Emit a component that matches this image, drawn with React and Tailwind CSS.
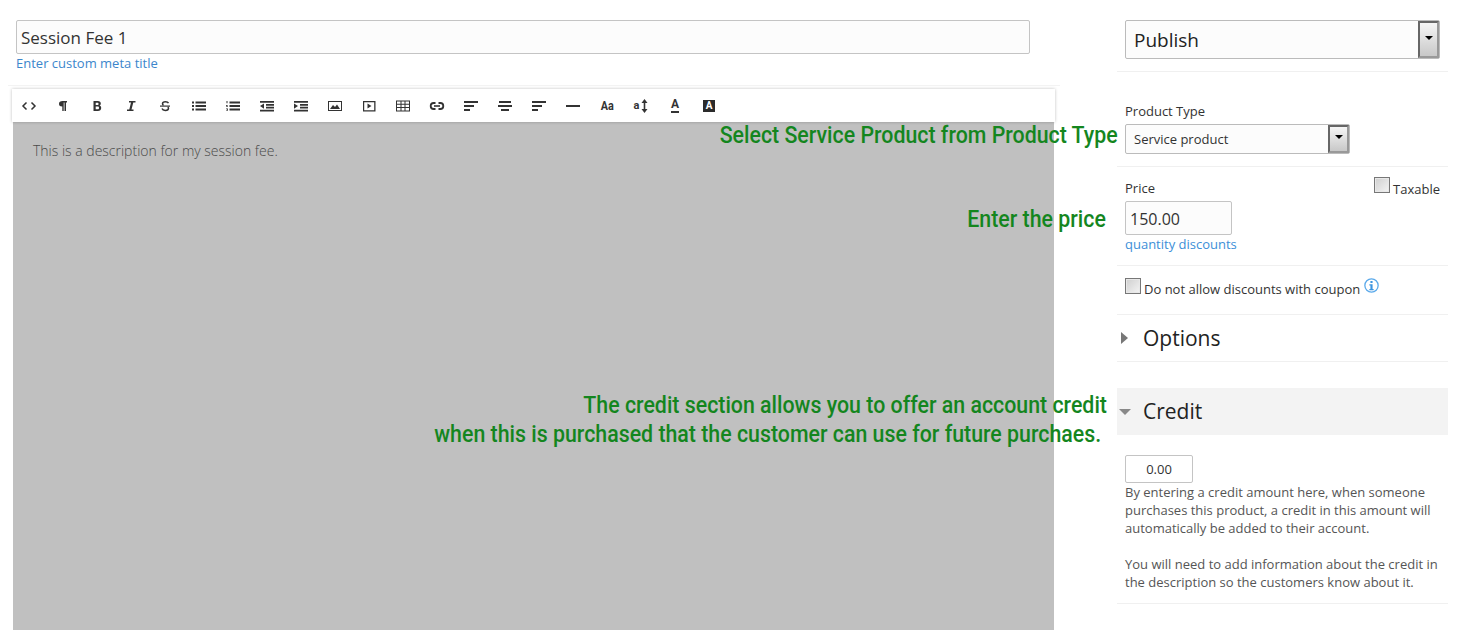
import React from "react";

const I = ({ children, w = 16, h = 16 }) => (
  <svg width={w} height={h} viewBox="0 0 16 16" fill="#333" className="block">{children}</svg>
);
const R = (x, y, w, h, k) => <rect key={k} x={x} y={y} width={w} height={h} />;

const icons = [
  <I><path d="M5.500 4.500 2 8l3.500 3.500M10.500 4.500 14 8l-3.500 3.500" fill="none" stroke="#333" strokeWidth="1.500" /></I>,
  <I><path d="M7.500 3H12v1.500h-1V13H9.500V4.500H8.700V13H7.300V8.500C4.500 8.500 4 7 4 5.700 4 4 5.300 3 7.500 3Z" /></I>,
  <I><path fillRule="evenodd" d="M4.500 3h4.300c2 0 3 1 3 2.400 0 1-.5 1.800-1.300 2.200 1 .3 1.700 1.200 1.700 2.300 0 1.800-1.300 3.100-3.300 3.100H4.500ZM6.700 4.800v2.200h1.700c.7 0 1.200-.4 1.200-1.100s-.5-1.100-1.200-1.100ZM6.700 8.600v2.600h2c.8 0 1.300-.5 1.300-1.300s-.5-1.300-1.300-1.300Z" /></I>,
  <I><path d="M6 3h6.500v1.500H10.300L8.500 11.500h2V13H4v-1.500h2.300L8 4.500H6Z" /></I>,
  <I><path d="M11.500 5.200C11 4.200 10 3.700 8.500 3.700c-1.800 0-3 .8-3 2 0 .8.400 1.300 1 1.700M5 10.600c.4 1.200 1.700 1.900 3.300 1.900 1.900 0 3.200-.9 3.200-2.200 0-.7-.3-1.200-.8-1.500" fill="none" stroke="#333" strokeWidth="1.500" /><path d="M3 7.500h10v1.200H3Z" /></I>,
  <I><path d="M1 3.500h2v2H1ZM1 7h2v2H1ZM1 10.500h2v2H1ZM4.500 3.500H15v2H4.500ZM4.500 7H15v2H4.500ZM4.500 10.500H15v2H4.500Z" /></I>,
  <I><path d="M1.500 3h1v2.300h-1ZM1 7h2v.6H2L3 9H1v-.6h1L1 7.500ZM1 10.500h2v2.300H1v-.5h1.300v-.4H1.500v-.4h.8v-.4H1ZM4.500 3.500H15v2H4.500ZM4.500 7H15v2H4.500ZM4.500 10.500H15v2H4.500Z" /></I>,
  <I><path d="M1 3h14v1.700H1ZM7 6h8v1.700H7ZM7 8.800h8v1.700H7ZM1 11.700h14v1.700H1ZM5 5.500v5.200L1 8Z" /></I>,
  <I><path d="M1 3h14v1.700H1ZM7 6h8v1.700H7ZM7 8.800h8v1.700H7ZM1 11.700h14v1.700H1ZM1 5.500v5.200L5 8Z" /></I>,
  <I><path fillRule="evenodd" d="M1 3h14v10H1Zm1 1v8h12V4Z" /><path d="M3 11l3-4 2 2 2-2.500 3 4.500Z" /></I>,
  <I><path fillRule="evenodd" d="M2 3h12.500v10.500H2Zm1.200 1.200v8h10v-8Z" /><path d="M6.500 5.500v5L10.500 8Z" /></I>,
  <I><path fillRule="evenodd" d="M1 2.500h14v11H1Zm1 1v2.200h3.500V3.500Zm4.500 0v2.200h3V3.500Zm4 0v2.200H14V3.500Zm-8.500 3.200v2.400h3.500V6.700Zm4.500 0v2.400h3V6.700Zm4 0v2.400H14V6.700Zm-8.500 3.400v2.400h3.500v-2.400Zm4.500 0v2.400h3v-2.400Zm4 0v2.400H14v-2.400Z" /></I>,
  <I><path d="M6.500 5H4.700a3 3 0 0 0 0 6h1.800M9.500 5h1.800a3 3 0 0 1 0 6H9.500" fill="none" stroke="#333" strokeWidth="1.800" /><path d="M5 7.200h6v1.600H5Z" /></I>,
  <I>{R(1, 3, 14, 2)}{R(1, 7, 10, 2)}{R(1, 11, 6, 2)}</I>,
  <I>{R(2, 3, 12, 2)}{R(1, 7, 14, 2)}{R(4, 11, 8, 2)}</I>,
  <I>{R(1, 3, 14, 2)}{R(1, 7, 10, 2)}{R(1, 11, 6, 2)}</I>,
  <I>{R(1, 7, 14, 2)}</I>,
  <span className="text-[12px] font-bold leading-none text-[#333] font-['Roboto',sans-serif] scale-x-90">Aa</span>,
  <span className="flex items-center text-[#333]">
    <span className="text-[11px] font-bold leading-none font-['Roboto',sans-serif]">a</span>
    <svg width="7" height="14" viewBox="0 0 7 14" fill="#333" className="ml-[2px]"><path d="M3.500 0 6.500 4H4.300v6h2.200l-3 4-3-4h2.200V4H.500Z" /></svg>
  </span>,
  <span className="flex flex-col items-center leading-none text-[#333]">
    <span className="text-[12px] font-bold leading-[11px] font-['Roboto',sans-serif]">A</span>
    <span className="w-[8px] h-[2px] mt-px bg-[#333]"></span>
  </span>,
  <span className="flex h-[12px] w-[12px] items-center justify-center bg-[#2b2b2b] text-[10px] font-bold leading-none text-white font-['Roboto',sans-serif]">A</span>,
];

const Caret = () => (
  <span className="flex h-full w-[21px] shrink-0 items-center justify-center border-2 border-t-[#666] border-l-[#666] border-r-[#999] border-b-[#999] bg-gradient-to-b from-[#f6f6f6] to-[#c8c8c8]">
    <span className="mb-[4px] h-0 w-0 border-x-[4px] border-t-[4px] border-x-transparent border-t-black"></span>
  </span>
);

const Check = () => (
  <span className="block h-[16px] w-[16px] shrink-0 border border-[#777] bg-gradient-to-br from-[#cfcfcf] to-[#f4f4f4] shadow-[inset_0_0_0_1px_#e8e8e8]"></span>
);

const Note = ({ className, children }) => (
  <div className={"absolute whitespace-nowrap text-right text-[24px] font-medium leading-[29px] text-[#14861e] font-['Roboto',sans-serif] origin-right scale-x-[0.889] " + className}>
    {children}
  </div>
);

export default function App() {
  return (
    <div className="relative h-[630px] w-[1462px] overflow-hidden bg-white font-['Open_Sans',sans-serif]">
      <div className="flex">
        <div className="w-[1054px] shrink-0">
          <div className="ml-[16px] mt-[20px] flex h-[34px] w-[1014px] items-center rounded-[2px] border border-[#c4c4c4] bg-[#fcfcfc] pl-[4px] pt-[1px] text-[17px] text-[#333]">
            Session Fee 1
          </div>
          <div className="ml-[16px] mt-[1px] h-[17px] text-[13px] leading-[17px] text-[#3c86cc]">Enter custom meta title</div>
          <div className="ml-[8px] mt-[13px] h-px w-[1052px] bg-[#f3f3f3]"></div>
          <div className="relative z-10 ml-[12px] mt-[3px] flex h-[33px] w-[1043px] items-center bg-white shadow-[0_0_3px_rgba(0,0,0,0.25)]">
            {icons.map((ic, i) => (
              <span key={i} className="flex h-[16px] w-[34px] shrink-0 items-center justify-center">
                {ic}
              </span>
            ))}
          </div>
          <div className="ml-[13px] h-[508px] bg-[#c0c0c0] px-[20px] pt-[20px] text-[14px] leading-[18px] text-[#4a4a4a] font-light">
            This is a description for my session fee.
          </div>
        </div>

        <div className="ml-[63px] w-[331px] shrink-0 text-[13px] text-[#333]">
          <div className="h-[72px] border-b border-[#f0f0f0] px-[8px] pt-[20px]">
            <div className="flex h-[39px] w-[315px] items-center rounded-[2px] border border-[#bbb] bg-[#fcfcfc] pl-[8px] text-[19px] text-[#222]">
              <span className="flex-1 pt-[2px]">Publish</span>
              <Caret />
            </div>
          </div>
          <div className="h-[95px] border-b border-[#f0f0f0] px-[8px] pt-[29px]">
            <div className="h-[23px] text-[13px] leading-[20px]">Product Type</div>
            <div className="flex h-[30px] w-[225px] items-center rounded-[2px] border border-[#bbb] bg-[#fcfcfc] pl-[8px]">
              <span className="flex-1 pt-[2px]">Service product</span>
              <Caret />
            </div>
          </div>
          <div className="h-[99px] border-b border-[#f0f0f0] pl-[8px] pr-[8px] pt-[11px]">
            <div className="flex justify-between">
              <div>
                <div className="h-[23px] leading-[20px]">Price</div>
                <div className="flex h-[34px] w-[107px] items-center rounded-[2px] border border-[#c4c4c4] bg-[#fcfcfc] pl-[4px] pt-[2px] text-[16px]">150.00</div>
                <div className="leading-[18px] text-[#3c8fd8]">quantity discounts</div>
              </div>
              <div className="-mt-[1px] flex items-start">
                <Check />
                <span className="ml-[3px] mt-[3px] leading-[18px]">Taxable</span>
              </div>
            </div>
          </div>
          <div className="h-[49px] border-b border-[#f0f0f0] pl-[8px] pt-[12px]">
            <div className="flex items-start">
              <Check />
              <span className="ml-[3px] mt-[2px] leading-[18px]">Do not allow discounts with coupon</span>
              <svg width="15" height="15" viewBox="0 0 14 14" className="ml-[4px]">
                <circle cx="7" cy="7" r="6.200" fill="#fff" stroke="#5aa9ea" strokeWidth="1.200" />
                <path d="M6 2.800h2v1.800H6ZM5 5.800h3v4.400h1v1.200H5v-1.200h1V7H5Z" fill="#3d95e0" />
              </svg>
            </div>
          </div>
          <div className="flex h-[47px] items-center border-b border-[#f0f0f0] pl-[4px]">
            <span className="h-0 w-0 border-y-[6px] border-l-[7px] border-y-transparent border-l-[#777]"></span>
            <span className="ml-[15px] pt-[2px] text-[21px] text-[#222]">Options</span>
          </div>
          <div className="mt-[26px] flex h-[47px] items-center bg-[#f3f3f3] pl-[2px]">
            <span className="h-0 w-0 border-x-[6px] border-t-[6px] border-x-transparent border-t-[#888]"></span>
            <span className="ml-[12px] text-[21px] text-[#222]">Credit</span>
          </div>
          <div className="h-[169px] border-b border-[#f0f0f0] px-[8px] pt-[20px]">
            <div className="flex h-[28px] w-[68px] items-center justify-center rounded-[2px] border border-[#c4c4c4] bg-white pt-[1px] text-[13px]">0.00</div>
            <div className="w-[315px] text-[13px] leading-[18px] text-[#555]">
              By entering a credit amount here, when someone purchases this product, a credit in this amount will automatically be added to their account.
              <div className="mt-[18px]">You will need to add information about the credit in the description so the customers know about it.</div>
            </div>
          </div>
        </div>
      </div>

      <Note className="right-[344px] top-[121px]">Select Service Product from Product Type</Note>
      <Note className="right-[356px] top-[205px]">Enter the price</Note>
      <Note className="right-[355px] top-[391px]">The credit section allows you to offer an account credit</Note>
      <Note className="right-[361px] top-[420px]">when this is purchased that the customer can use for future purchaes.</Note>
    </div>
  );
}
